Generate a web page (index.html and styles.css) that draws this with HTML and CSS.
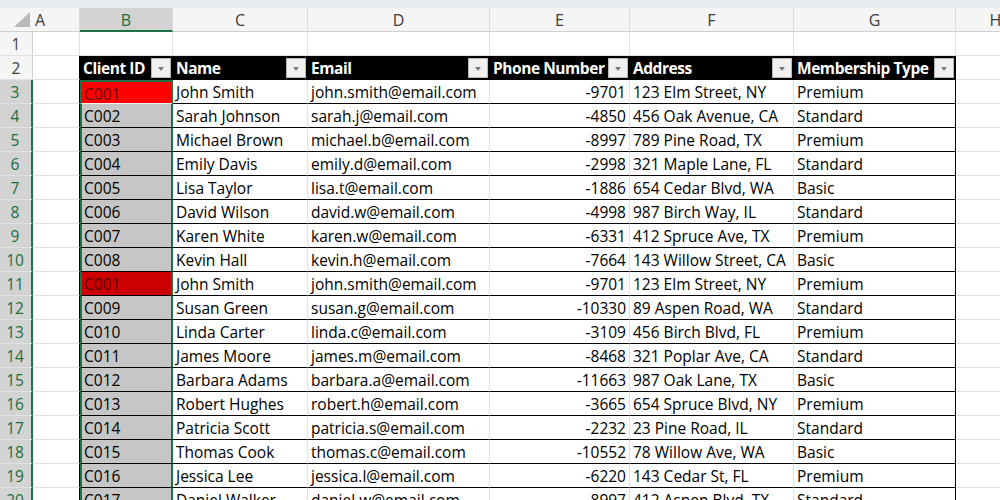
FILE: index.html
```html
<!DOCTYPE html>
<html>
<head>
<meta charset="utf-8">
<link rel="stylesheet" href="styles.css">
</head>
<body>
<div class="topbar"></div>
<div class="sheet">
  <div class="row colhead">
    <div class="corner"><svg width="33" height="24" viewBox="0 0 33 24"><polygon points="14,19 30,19 30,4" fill="#b9b9b9"/></svg></div>
    <div class="ch cha">A</div><div class="ch chsel">B</div><div class="ch">C</div><div class="ch">D</div><div class="ch">E</div><div class="ch">F</div><div class="ch">G</div><div class="ch">H</div>
  </div>
  <div class="row">
    <div class="rh">1</div><div class="c"></div><div class="c"></div><div class="c"></div><div class="c"></div><div class="c"></div><div class="c"></div><div class="c"></div><div class="c"></div>
  </div>
  <div class="row">
    <div class="rh">2</div><div class="c edge"></div>
    <div class="c th">Client ID<span class="dd"></span></div>
    <div class="c th">Name<span class="dd"></span></div>
    <div class="c th">Email<span class="dd"></span></div>
    <div class="c th">Phone Number<span class="dd"></span></div>
    <div class="c th">Address<span class="dd"></span></div>
    <div class="c th">Membership Type<span class="dd"></span></div>
    <div class="c"></div>
  </div>
  <div class="row"><div class="rh rhsel">3</div><div class="c edge"></div><div class="c t s active dup">C001</div><div class="c t">John Smith</div><div class="c t">john.smith@email.com</div><div class="c t num">-9701</div><div class="c t">123 Elm Street, NY</div><div class="c t last">Premium</div><div class="c"></div></div>
  <div class="row"><div class="rh rhsel">4</div><div class="c edge"></div><div class="c t s">C002</div><div class="c t">Sarah Johnson</div><div class="c t">sarah.j@email.com</div><div class="c t num">-4850</div><div class="c t">456 Oak Avenue, CA</div><div class="c t last">Standard</div><div class="c"></div></div>
  <div class="row"><div class="rh rhsel">5</div><div class="c edge"></div><div class="c t s">C003</div><div class="c t">Michael Brown</div><div class="c t">michael.b@email.com</div><div class="c t num">-8997</div><div class="c t">789 Pine Road, TX</div><div class="c t last">Premium</div><div class="c"></div></div>
  <div class="row"><div class="rh rhsel">6</div><div class="c edge"></div><div class="c t s">C004</div><div class="c t">Emily Davis</div><div class="c t">emily.d@email.com</div><div class="c t num">-2998</div><div class="c t">321 Maple Lane, FL</div><div class="c t last">Standard</div><div class="c"></div></div>
  <div class="row"><div class="rh rhsel">7</div><div class="c edge"></div><div class="c t s">C005</div><div class="c t">Lisa Taylor</div><div class="c t">lisa.t@email.com</div><div class="c t num">-1886</div><div class="c t">654 Cedar Blvd, WA</div><div class="c t last">Basic</div><div class="c"></div></div>
  <div class="row"><div class="rh rhsel">8</div><div class="c edge"></div><div class="c t s">C006</div><div class="c t">David Wilson</div><div class="c t">david.w@email.com</div><div class="c t num">-4998</div><div class="c t">987 Birch Way, IL</div><div class="c t last">Standard</div><div class="c"></div></div>
  <div class="row"><div class="rh rhsel">9</div><div class="c edge"></div><div class="c t s">C007</div><div class="c t">Karen White</div><div class="c t">karen.w@email.com</div><div class="c t num">-6331</div><div class="c t">412 Spruce Ave, TX</div><div class="c t last">Premium</div><div class="c"></div></div>
  <div class="row"><div class="rh rhsel">10</div><div class="c edge"></div><div class="c t s">C008</div><div class="c t">Kevin Hall</div><div class="c t">kevin.h@email.com</div><div class="c t num">-7664</div><div class="c t">143 Willow Street, CA</div><div class="c t last">Basic</div><div class="c"></div></div>
  <div class="row"><div class="rh rhsel">11</div><div class="c edge"></div><div class="c t s dupsel">C001</div><div class="c t">John Smith</div><div class="c t">john.smith@email.com</div><div class="c t num">-9701</div><div class="c t">123 Elm Street, NY</div><div class="c t last">Premium</div><div class="c"></div></div>
  <div class="row"><div class="rh rhsel">12</div><div class="c edge"></div><div class="c t s">C009</div><div class="c t">Susan Green</div><div class="c t">susan.g@email.com</div><div class="c t num">-10330</div><div class="c t">89 Aspen Road, WA</div><div class="c t last">Standard</div><div class="c"></div></div>
  <div class="row"><div class="rh rhsel">13</div><div class="c edge"></div><div class="c t s">C010</div><div class="c t">Linda Carter</div><div class="c t">linda.c@email.com</div><div class="c t num">-3109</div><div class="c t">456 Birch Blvd, FL</div><div class="c t last">Premium</div><div class="c"></div></div>
  <div class="row"><div class="rh rhsel">14</div><div class="c edge"></div><div class="c t s">C011</div><div class="c t">James Moore</div><div class="c t">james.m@email.com</div><div class="c t num">-8468</div><div class="c t">321 Poplar Ave, CA</div><div class="c t last">Standard</div><div class="c"></div></div>
  <div class="row"><div class="rh rhsel">15</div><div class="c edge"></div><div class="c t s">C012</div><div class="c t">Barbara Adams</div><div class="c t">barbara.a@email.com</div><div class="c t num">-11663</div><div class="c t">987 Oak Lane, TX</div><div class="c t last">Basic</div><div class="c"></div></div>
  <div class="row"><div class="rh rhsel">16</div><div class="c edge"></div><div class="c t s">C013</div><div class="c t">Robert Hughes</div><div class="c t">robert.h@email.com</div><div class="c t num">-3665</div><div class="c t">654 Spruce Blvd, NY</div><div class="c t last">Premium</div><div class="c"></div></div>
  <div class="row"><div class="rh rhsel">17</div><div class="c edge"></div><div class="c t s">C014</div><div class="c t">Patricia Scott</div><div class="c t">patricia.s@email.com</div><div class="c t num">-2232</div><div class="c t">23 Pine Road, IL</div><div class="c t last">Standard</div><div class="c"></div></div>
  <div class="row"><div class="rh rhsel">18</div><div class="c edge"></div><div class="c t s">C015</div><div class="c t">Thomas Cook</div><div class="c t">thomas.c@email.com</div><div class="c t num">-10552</div><div class="c t">78 Willow Ave, WA</div><div class="c t last">Basic</div><div class="c"></div></div>
  <div class="row"><div class="rh rhsel">19</div><div class="c edge"></div><div class="c t s">C016</div><div class="c t">Jessica Lee</div><div class="c t">jessica.l@email.com</div><div class="c t num">-6220</div><div class="c t">143 Cedar St, FL</div><div class="c t last">Premium</div><div class="c"></div></div>
  <div class="row"><div class="rh rhsel">20</div><div class="c edge"></div><div class="c t s">C017</div><div class="c t">Daniel Walker</div><div class="c t">daniel.w@email.com</div><div class="c t num">-8997</div><div class="c t">412 Aspen Blvd, TX</div><div class="c t last">Standard</div><div class="c"></div></div>
</div>
</body>
</html>
```
FILE: styles.css
```css
html, body {
  margin: 0;
  padding: 0;
  background: #ffffff;
  overflow: hidden;
}
body {
  width: 1000px;
  height: 500px;
  font-family: "Open Sans", "Noto Sans", sans-serif;
  font-size: 15.5px;
  color: #000;
}
.topbar {
  height: 8px;
  background: #e9ecef;
}
.sheet {
  width: 1000px;
  overflow: hidden;
}
.row {
  display: grid;
  grid-template-columns: 33px 47px 93px 135px 182px 140px 164px 162px 80px;
  width: 1036px;
  height: 24px;
}
.row > div {
  box-sizing: border-box;
  height: 24px;
  line-height: 24px;
  white-space: nowrap;
  overflow: hidden;
  position: relative;
}
.corner {
  background: #f5f5f5;
  border-bottom: 1px solid #d0d0d0;
}
.corner svg { display: block; }
.ch {
  background: #f5f5f5;
  color: #3c3c3c;
  text-align: center;
  font-size: 16px;
  border-right: 1px solid #d9d9d9;
  border-bottom: 1px solid #d0d0d0;
}
.cha {
  text-align: left;
  padding-left: 2px;
}
.chsel {
  background: #d3d3d3;
  color: #1a6e3e;
  border-bottom: 2px solid #1e7145;
}
.rh {
  background: #f5f5f5;
  color: #3c3c3c;
  text-align: center;
  border-right: 1px solid #d0d0d0;
  border-bottom: 1px solid #e1e1e1;
}
.rhsel {
  background: #d3d3d3;
  color: #1a6e3e;
  border-right: 2px solid #1e7145;
  padding-right: 1px;
}
.c {
  border-right: 1px solid #e1e1e1;
  border-bottom: 1px solid #e1e1e1;
  padding: 0 3px;
}
.edge {
  border-right-color: #000;
}
.th {
  background: #000;
  color: #fff;
  font-weight: 700;
  font-size: 15.5px;
  letter-spacing: -0.45px;
  border-right-color: #000;
  border-bottom-color: #000;
}
.dd {
  position: absolute;
  right: 1px;
  top: 2px;
  width: 20px;
  height: 20px;
  box-sizing: border-box;
  background: #f0f0f0;
  border: 1px solid #b8b8b8;
}
.dd::after {
  content: "";
  position: absolute;
  left: 6px;
  top: 8px;
  border-left: 3.5px solid transparent;
  border-right: 3.5px solid transparent;
  border-top: 4px solid #7a7a7a;
}
.t {
  border-bottom-color: #000;
}
.num {
  text-align: right;
}
.last {
  border-right-color: #000;
}
.s {
  background: #c6c6c6;
  border-left: 2px solid #1e7145;
  border-right: 2px solid #1e7145;
  padding-left: 2px;
}
.active {
  background: #ff0000;
  border-top: 2px solid #1e7145;
  border-bottom-color: #f2f2f2;
  line-height: 22px;
}
.dup {
  color: #6a0000;
}
.dupsel {
  background: #cc0000;
  color: #5a0000;
}
```
